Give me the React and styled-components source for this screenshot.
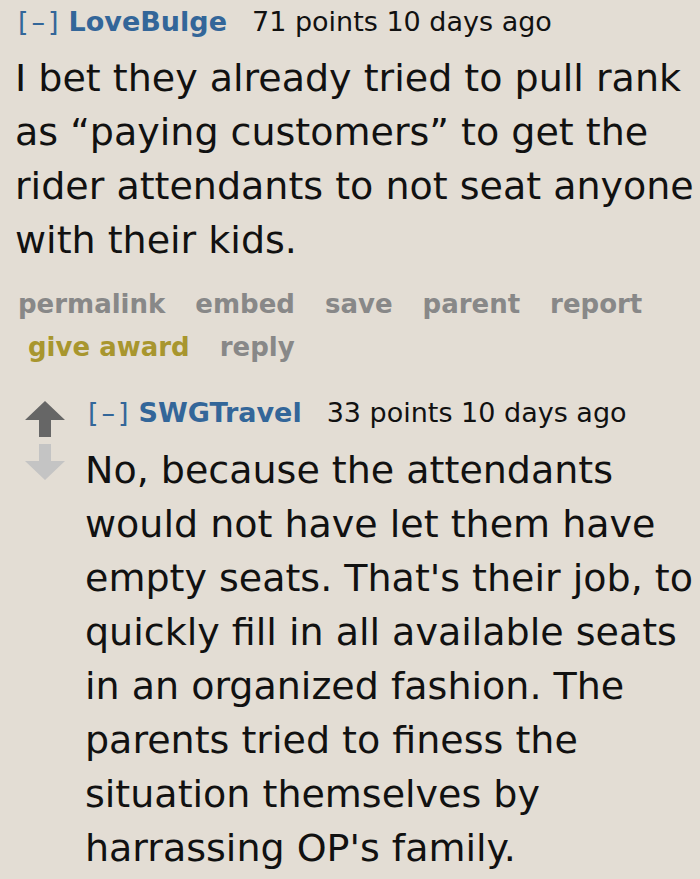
import React from "react";
import styled, { createGlobalStyle } from "styled-components";

const Global = createGlobalStyle`
  html, body { margin: 0; padding: 0; background: #e3ddd4; }
  body { font-family: "DejaVu Sans", Verdana, sans-serif; }
`;

const Page = styled.div`
  width: 700px;
  height: 879px;
  overflow: hidden;
  background: #e3ddd4;
  box-sizing: border-box;
  padding: 4px 0 0 15px;
`;

const Comment = styled.div`
  display: flex;
  flex-direction: column;
`;

const Tagline = styled.div`
  display: flex;
  align-items: baseline;
  font-size: 27px;
  line-height: 36px;
  color: #111;
  white-space: nowrap;
  padding-left: ${(p) => p.$indent || 0}px;
`;

const Expand = styled.span`
  color: #369;
  letter-spacing: 3px;
  margin-right: 7px;
`;

const Author = styled.span`
  color: #369;
  font-weight: bold;
  margin-right: 25px;
`;

const Body = styled.p`
  margin: ${(p) => p.$top || 0}px 0 0 0;
  font-size: 38px;
  line-height: 54px;
  color: #111;
`;

const ActionRow = styled.div`
  display: flex;
  gap: 30px;
  padding-left: ${(p) => p.$indent || 0}px;
  margin-top: ${(p) => p.$top || 0}px;
`;

const Action = styled.span`
  font-size: 26px;
  line-height: 43px;
  font-weight: bold;
  color: ${(p) => (p.$gold ? "#a8962e" : "#888")};
`;

const Child = styled.div`
  display: flex;
  margin-top: 26px;
  margin-left: 10px;
`;

const Votes = styled.div`
  width: 60px;
  flex-shrink: 0;
  display: flex;
  flex-direction: column;
  align-items: flex-start;
  padding-top: 6px;
  gap: 7px;
`;

const ChildContent = styled.div`
  display: flex;
  flex-direction: column;
`;

const Arrow = ({ dir, color }) => (
  <svg width="40" height="36" viewBox="0 0 40 36">
    {dir === "up" ? (
      <path d="M20 0 L40 19 L26 19 L26 36 L14 36 L14 19 L0 19 Z" fill={color} />
    ) : (
      <path d="M14 0 L26 0 L26 17 L40 17 L20 36 L0 17 L14 17 Z" fill={color} />
    )}
  </svg>
);

export default function App() {
  return (
    <>
      <Global />
      <Page>
        <Comment>
          <Tagline $indent={3}>
            <Expand>[–]</Expand>
            <Author>LoveBulge</Author>
            <span>71 points 10 days ago</span>
          </Tagline>
          <Body $top={11}>
            I bet they already tried to pull rank as “paying customers” to get the rider attendants to not seat anyone with their kids.
          </Body>
          <ActionRow $indent={3} $top={16}>
            <Action>permalink</Action>
            <Action>embed</Action>
            <Action>save</Action>
            <Action>parent</Action>
            <Action>report</Action>
          </ActionRow>
          <ActionRow $indent={13}>
            <Action $gold>give award</Action>
            <Action>reply</Action>
          </ActionRow>
        </Comment>
        <Child>
          <Votes>
            <Arrow dir="up" color="#666" />
            <Arrow dir="down" color="#c4c4c4" />
          </Votes>
          <ChildContent>
            <Tagline $indent={3}>
              <Expand>[–]</Expand>
              <Author>SWGTravel</Author>
              <span>33 points 10 days ago</span>
            </Tagline>
            <Body $top={12}>
              No, because the attendants would not have let them have empty seats. That's their job, to quickly fill in all available seats in an organized fashion. The parents tried to finess the situation themselves by harrassing OP's family.
            </Body>
          </ChildContent>
        </Child>
      </Page>
    </>
  );
}
